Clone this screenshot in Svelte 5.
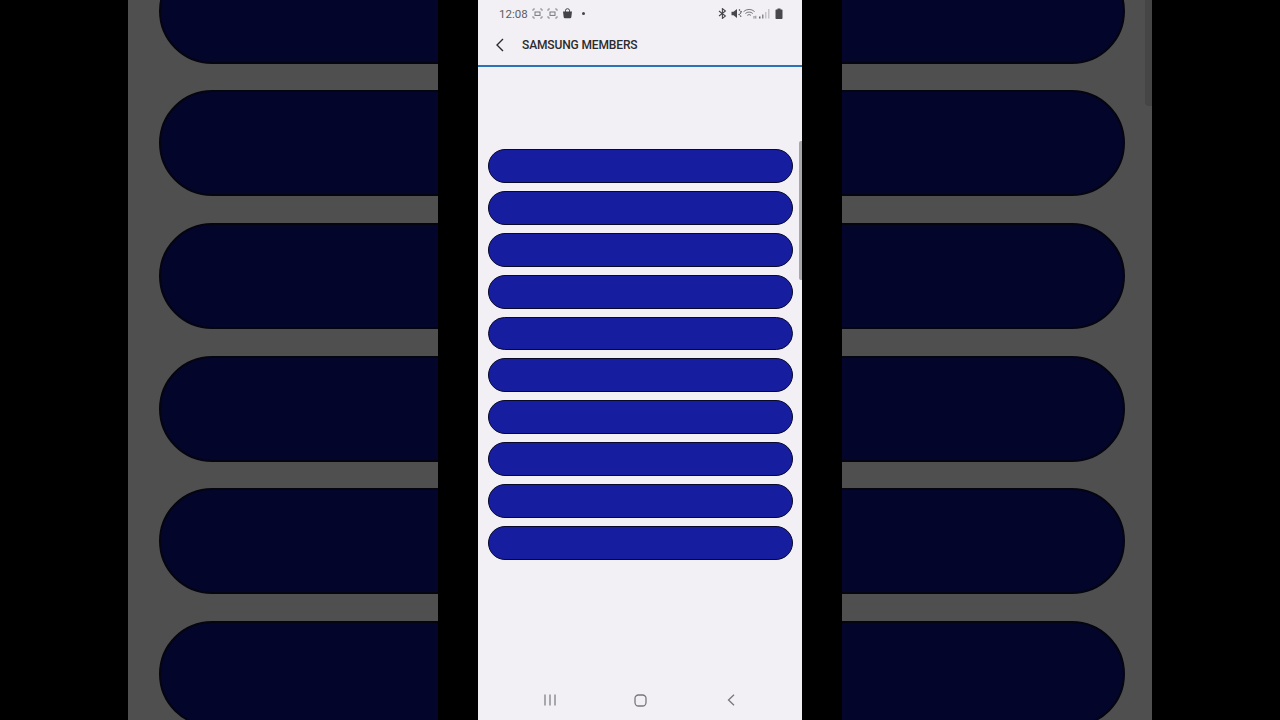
<script>
  const sidePills = Array.from({ length: 6 }, (_, i) => i);
  const rows = Array.from({ length: 10 }, (_, i) => i);
</script>

<div class="screen">
  <div class="side left">
    {#each sidePills as p (p)}
      <div class="side-pill"></div>
    {/each}
  </div>

  <div class="phone">
    <div class="status">
      <span class="time">12:08</span>
      <svg class="ic" width="11" height="11" viewBox="0 0 11 11" fill="none" stroke="#77777b" stroke-width="1">
        <path d="M1 3V1h2M8 1h2v2M10 8v2H8M3 10H1V8" stroke-width="0.8" />
        <rect x="3" y="4" width="5" height="3.4" />
      </svg>
      <svg class="ic" width="11" height="11" viewBox="0 0 11 11" fill="none" stroke="#77777b" stroke-width="1">
        <path d="M1 3V1h2M8 1h2v2M10 8v2H8M3 10H1V8" stroke-width="0.8" />
        <rect x="3" y="4" width="5" height="3.4" />
      </svg>
      <svg class="ic" width="11" height="11" viewBox="0 0 11 11">
        <path d="M1 3.600h9l-.7 5.600a1.200 1.200 0 0 1-1.200 1H2.900a1.200 1.200 0 0 1-1.200-1z" fill="#444448" />
        <path d="M3.400 4V2.800a2.100 2.100 0 0 1 4.200 0V4" fill="none" stroke="#444448" stroke-width="1" />
      </svg>
      <span class="dot"></span>
      <span class="spacer"></span>
      <svg class="ic" width="9" height="11" viewBox="0 0 9 11" fill="none" stroke="#48484c" stroke-width="1.100">
        <path d="M1 3l6.400 5L4.400 10.400V.6L7.400 3 1 8" />
      </svg>
      <svg class="ic mute" width="11" height="11" viewBox="0 0 11 11">
        <path d="M0.500 3.800h2L6 1v9L2.500 7.200h-2z" fill="#48484c" />
        <path d="M8 1.500l2.500 2.500L8 6.500l2.500 2.500" fill="none" stroke="#48484c" stroke-width="1.100" stroke-dasharray="1.400 .8" />
      </svg>
      <svg class="ic wifi" width="14" height="11" viewBox="0 0 14 11" fill="none" stroke="#6a6a6e" stroke-width="0.9">
        <path d="M.6 3.600a8 8 0 0 1 11 0M2.400 5.500a5.500 5.500 0 0 1 7.400 0M4.200 7.300a3 3 0 0 1 3.800 0" />
        <path d="M11 8v2.600M12.800 7.800v2.800" stroke="#77777b" />
      </svg>
      <svg class="ic" width="12" height="11" viewBox="0 0 12 11">
        <rect x="0" y="8.500" width="1.500" height="2" fill="#66666a" />
        <rect x="3" y="6.500" width="1.500" height="4" fill="#88888c" />
        <rect x="6" y="4" width="1.500" height="6.500" fill="#c4c4c8" />
        <rect x="9" y="1" width="1.500" height="9.500" fill="#c4c4c8" />
      </svg>
      <svg class="ic" width="8" height="11" viewBox="0 0 8 11">
        <path d="M2.500 .5h3v1h1.200a.8.8 0 0 1 .8.800v7.900a.8.8 0 0 1-.8.800H1.300a.8.8 0 0 1-.8-.8V2.300a.8.8 0 0 1 .8-.8h1.200z" fill="#48484c" />
      </svg>
    </div>

    <header class="appbar">
      <svg class="back" width="10" height="14" viewBox="0 0 10 14" fill="none" stroke="#2b2b2e" stroke-width="1.400">
        <path d="M8 1L2 7l6 6" />
      </svg>
      <h1>SAMSUNG MEMBERS</h1>
    </header>

    <div class="list">
      {#each rows as r (r)}
        <div class="pill"></div>
      {/each}
    </div>

    <nav class="navbar">
      <svg width="12" height="12" viewBox="0 0 12 12" fill="none" stroke="#77777b" stroke-width="1.200">
        <path d="M1 .5v11M6 .5v11M11 .5v11" />
      </svg>
      <svg width="13" height="13" viewBox="0 0 13 13" fill="none" stroke="#77777b" stroke-width="1.300">
        <rect x="1" y="1" width="11" height="11" rx="3.500" />
      </svg>
      <svg width="8" height="12" viewBox="0 0 8 12" fill="none" stroke="#77777b" stroke-width="1.300">
        <path d="M7 .8L1.500 6 7 11.200" />
      </svg>
    </nav>

    <div class="scrollbar"></div>
  </div>

  <div class="side right">
    {#each sidePills as p (p)}
      <div class="side-pill"></div>
    {/each}
    <div class="side-scrollbar"></div>
  </div>
</div>

<style>
  :global(body) {
    margin: 0;
    background: #000;
  }

  .screen {
    width: 1280px;
    height: 720px;
    overflow: hidden;
    background: #000;
    display: flex;
    justify-content: center;
    gap: 40px;
    font-family: Roboto, "Liberation Sans", sans-serif;
  }

  /* blurred, zoomed copy of the phone behind it */
  .side {
    position: relative;
    width: 310px;
    height: 720px;
    flex: none;
    overflow: hidden;
    background: #4f4f4f;
    display: flex;
    flex-direction: column;
    gap: 26.6px;
  }
  .side.left {
    align-items: flex-start;
    padding-left: 31px;
    box-sizing: border-box;
  }
  .side.right {
    align-items: flex-end;
    padding-right: 27px;
    box-sizing: border-box;
  }
  .side-pill {
    width: 966px;
    height: 106px;
    flex: none;
    box-sizing: border-box;
    background: #03052a;
    border: 2px solid #050510;
    border-radius: 53px;
    filter: blur(0.6px);
  }
  .side-pill:first-child {
    margin-top: -42.2px;
  }
  .side-scrollbar {
    position: absolute;
    top: -10px;
    right: 0;
    width: 7px;
    height: 116px;
    background: #454545;
    border-radius: 4px 0 0 4px;
  }

  .phone {
    position: relative;
    width: 324px;
    height: 720px;
    flex: none;
    background: #f2f0f4;
    display: flex;
    flex-direction: column;
  }

  .status {
    height: 26px;
    padding: 1px 19px 0 21px;
    box-sizing: border-box;
    display: flex;
    align-items: center;
    gap: 4px;
    flex: none;
  }
  .time {
    font-size: 11.5px;
    color: #5c5c60;
  }
  .ic {
    flex: none;
  }
  .mute {
    margin-right: -3px;
  }
  .wifi {
    margin-right: -2px;
  }
  .dot {
    width: 3px;
    height: 3px;
    margin-left: 5px;
    border-radius: 50%;
    background: #444448;
  }
  .spacer {
    flex: 1;
  }

  .appbar {
    height: 41px;
    box-sizing: border-box;
    padding: 0 0 2px 17px;
    display: flex;
    align-items: center;
    border-bottom: 2px solid #2a74b6;
    flex: none;
  }
  .appbar h1 {
    margin: 0 0 0 17px;
    font-size: 12px;
    font-weight: 500;
    line-height: 16px;
    letter-spacing: -0.13px;
    color: #2b2b2e;
    white-space: nowrap;
  }

  .list {
    margin: 82px 9px 0 10px;
    display: flex;
    flex-direction: column;
    gap: 8px;
  }
  .pill {
    height: 33.9px;
    box-sizing: border-box;
    background: #171d9f;
    border: 1px solid #08082a;
    border-radius: 17px;
  }

  .navbar {
    margin-top: auto;
    height: 40px;
    flex: none;
    display: grid;
    grid-template-columns: repeat(3, 90.5px);
    justify-content: center;
    justify-items: center;
    align-items: center;
  }

  .scrollbar {
    position: absolute;
    top: 141px;
    right: 0;
    width: 3px;
    height: 139px;
    background: #a8a8ac;
    border-radius: 2px 0 0 2px;
  }
</style>
